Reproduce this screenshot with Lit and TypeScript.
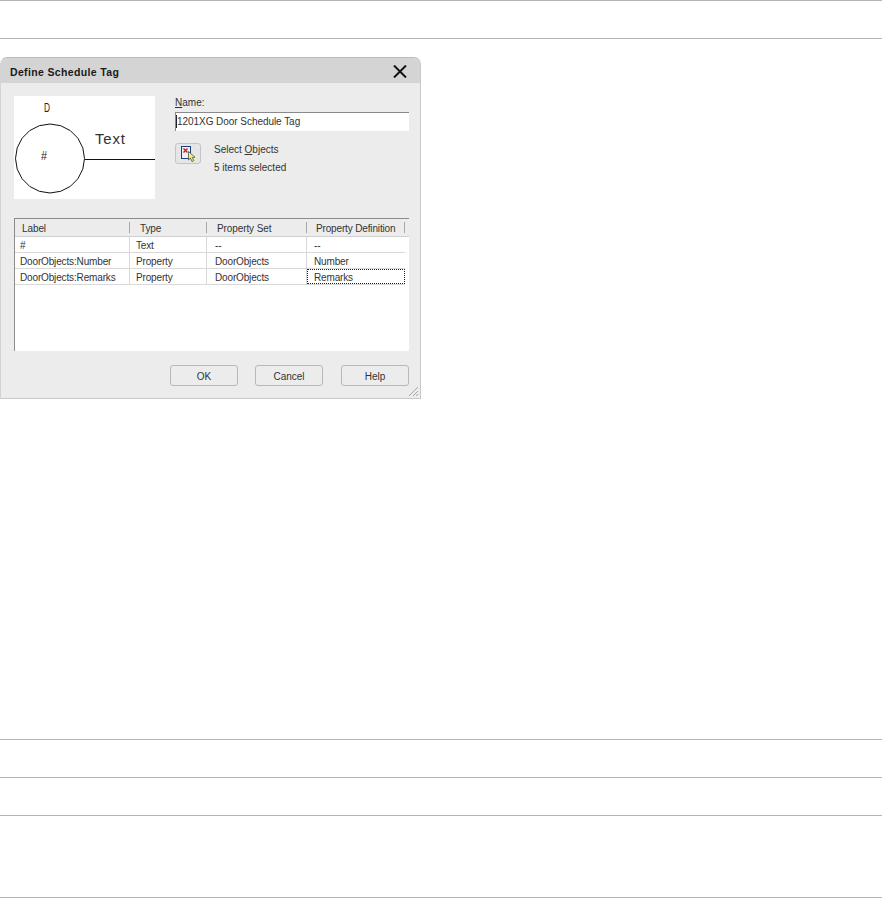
import { LitElement, html, css, svg } from "lit";
import { customElement } from "lit/decorators.js";

const rows = [
  ["#", "Text", "--", "--"],
  ["DoorObjects:Number", "Property", "DoorObjects", "Number"],
  ["DoorObjects:Remarks", "Property", "DoorObjects", "Remarks"],
];
const circlePoints = Array.from({ length: 20 }, (_, i) => {
  const a = (i / 20) * Math.PI * 2;
  return `${36 + 34.5 * Math.cos(a)},${62.5 + 34.5 * Math.sin(a)}`;
}).join(" ");

@customElement("app-root")
export class AppRoot extends LitElement {
  static styles = css`
    :host { display: block; width: 882px; height: 899px; background: #fff; overflow: hidden;
      font-family: "Liberation Sans", Arial, sans-serif; font-size: 10px; color: #111; }
    .rule { border-top: 1px solid #b4b4b4; box-sizing: border-box; }
    .top { height: 38px; }
    .top-end { height: 19px; }
    .band { height: 38px; }
    .tall { height: 82px; }
    .stage { height: 682px; }
    .dialog { width: 421px; height: 342px; box-sizing: border-box; background: #ececec;
      border: 1px solid #c8c8c8; border-left-color: #d4d4d4; border-top-color: #bcbcbc;
      border-radius: 7px 7px 0 0; position: relative; display: flex; flex-direction: column; overflow: hidden; }
    .title { height: 25px; box-sizing: border-box; flex: none; background: #d4d4d4; display: flex; align-items: center;
      justify-content: space-between; padding: 2px 13px 0 9px; font-weight: bold; font-size: 10.5px;
      letter-spacing: 0.35px; color: #1a1a1a; }
    .title svg { display: block; }
    .body { flex: 1; display: flex; flex-direction: column; padding: 13px 11px 12px 13px; }
    .upper { display: flex; gap: 20px; height: 103px; }
    .preview { width: 141px; height: 103px; background: #fff; flex: none; }
    .preview svg { display: block; }
    .side { width: 235px; padding-top: 1px; }
    .side label { display: block; height: 15px; line-height: 11px; color: #333; }
    u { text-decoration-thickness: 1px; }
    .input { height: 19px; box-sizing: border-box; background: #fff; border-top: 1px solid #8a8a8a;
      border-left: 1px solid #8a8a8a; display: flex; align-items: center; font-size: 10px;
      letter-spacing: -0.05px; color: #333; padding-bottom: 2px; }
    .caret { width: 1px; height: 13px; background: #222; }
    .select { display: flex; gap: 13px; margin-top: 12px; }
    .pick { width: 26px; height: 21px; box-sizing: border-box; border: 1px solid #c4c4c4; border-radius: 3px;
      background: #e6e6e6; display: flex; align-items: center; justify-content: center; padding: 0; }
    .select-text { display: flex; flex-direction: column; gap: 6px; line-height: 12px; color: #333; padding-top: 1px; }
    .table { margin-top: 19px; height: 133px; width: 395px; box-sizing: border-box; background: #fff;
      border-top: 1px solid #8c8c8c; border-left: 1px solid #8c8c8c; flex: none; }
    .head, .row { display: grid; grid-template-columns: 115px 77px 100px 98px; }
    .head { height: 17px; border-bottom: 1px solid #d0d0d0; background: #ececec; letter-spacing: -0.1px; }
    .head div { display: flex; align-items: center; padding: 2px 0 0 7px; position: relative; color: #333; }
    .head div:nth-child(2), .head div:nth-child(3) { padding-left: 10px; }
    .head div:nth-child(4) { padding-left: 9px; letter-spacing: -0.15px; }
    .head div::after { content: ""; position: absolute; right: 0; top: 3px; bottom: 3px; width: 1px; background: #a8a8a8; }
    .row { height: 16px; box-sizing: border-box; border-bottom: 1px solid #d8d8d8; width: 390px; letter-spacing: -0.15px; }
    .row div { border-right: 1px solid #d8d8d8; padding-left: 5px; line-height: 17px; height: 15px; color: #333; white-space: nowrap; }
    .row div:nth-child(2) { padding-left: 6px; }
    .row div:nth-child(3) { padding-left: 8px; }
    .row div:nth-child(4) { padding-left: 7px; border-right: none; }
    .focus { outline: 1px dotted #222; outline-offset: -1px; }
    .buttons { display: flex; gap: 17px; justify-content: flex-end; margin-top: 14px; }
    .buttons button { width: 68px; height: 21px; box-sizing: border-box; background: #ececec;
      border: 1px solid #b8b8b8; border-radius: 3px; font: inherit; color: #333; padding: 2px 0 0; }
    .buttons button:last-child { margin-left: 1px; }
    .grip { position: absolute; right: 1px; bottom: 1px; display: block; }
  `;

  private preview() {
    return svg`<svg width="141" height="103" viewBox="0 0 141 103">
      <polygon points=${circlePoints} fill="none" stroke="#111" stroke-width="1"/>
      <line x1="71" y1="63.5" x2="141" y2="63.5" stroke="#111" stroke-width="1"/>
      <text x="30" y="16" font-size="13" font-family="Liberation Sans" fill="#222" textLength="6" lengthAdjust="spacingAndGlyphs">D</text>
      <text x="27" y="64" font-size="13" font-family="Liberation Sans" fill="#222" textLength="6" lengthAdjust="spacingAndGlyphs">#</text>
      <text x="81" y="48" font-size="15" font-family="Liberation Sans" fill="#333" textLength="30" lengthAdjust="spacing">Text</text>
    </svg>`;
  }

  private pickIcon() {
    return html`<svg width="20" height="18" viewBox="0 0 20 18">
      <rect x="3.5" y="1.5" width="9" height="12" fill="#e8f0fa" stroke="#1c3f7c"/>
      <path d="M5.5 3.5l4 4M9.5 3.5l-4 4" stroke="#d81818" stroke-width="1.4" fill="none"/>
      <path d="M10.5 6.5v8.5l2-1.8 1.5 3.3 1.8-.8-1.5-3.2 2.7-.2z" fill="#f6e98a" stroke="#4a5a3a" stroke-width=".8"/>
    </svg>`;
  }

  render() {
    return html`
      <div class="rule top"></div>
      <div class="rule top-end"></div>
      <div class="stage">
        <div class="dialog">
          <div class="title">
            <span>Define Schedule Tag</span>
            <svg width="14" height="13" viewBox="0 0 14 13"><path d="M1 .5l12 12M13 .5l-12 12" stroke="#111" stroke-width="2" fill="none"/></svg>
          </div>
          <div class="body">
            <div class="upper">
              <div class="preview">${this.preview()}</div>
              <div class="side">
                <label><u>N</u>ame:</label>
                <div class="input"><span class="caret"></span>1201XG Door Schedule Tag</div>
                <div class="select">
                  <button class="pick">${this.pickIcon()}</button>
                  <div class="select-text"><span>Select <u>O</u>bjects</span><span>5 items selected</span></div>
                </div>
              </div>
            </div>
            <div class="table">
              <div class="head"><div>Label</div><div>Type</div><div>Property Set</div><div>Property Definition</div></div>
              ${rows.map((r, i) => html`<div class="row">${r.map((c, j) =>
                html`<div class=${i === 2 && j === 3 ? "focus" : ""}>${c}</div>`)}</div>`)}
            </div>
            <div class="buttons"><button>OK</button><button>Cancel</button><button>Help</button></div>
          </div>
          <svg class="grip" width="12" height="12" viewBox="0 0 12 12"><path d="M11 2L2 11M11 6L6 11M11 9L9 11" stroke="#a8a8a8" fill="none"/></svg>
        </div>
      </div>
      <div class="rule band"></div>
      <div class="rule band"></div>
      <div class="rule tall"></div>
      <div class="rule"></div>
    `;
  }
}
